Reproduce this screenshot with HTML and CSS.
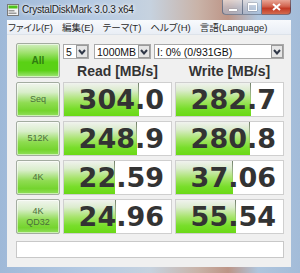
FILE: index.html
```html
<!DOCTYPE html>
<html lang="ja">
<head>
    <meta charset="UTF-8">
    <title>CrystalDiskMark 3.0.3 x64</title>
    <link rel="stylesheet" href="styles.css">
</head>
<body>

    <div class="window">
        <div class="titlebar">
            <svg class="app-icon" width="12" height="12" viewBox="0 0 12 12">
                <rect x="0.5" y="0.5" width="11" height="11" fill="#f4f4f4" stroke="#7a7a7a"/>
                <rect x="1.5" y="1.5" width="9" height="3" fill="#4cc21a"/>
                <rect x="1.5" y="6" width="6" height="1.5" fill="#9a9a9a"/>
                <rect x="1.5" y="8.5" width="8" height="1.5" fill="#9a9a9a"/>
            </svg>
            <span class="title">CrystalDiskMark 3.0.3 x64</span>
            <div class="caption-buttons">
                <span class="cap-btn cap-min"><i></i></span>
                <span class="cap-btn cap-max"><i></i></span>
                <span class="cap-btn cap-close">
                    <svg width="9" height="8" viewBox="0 0 9 8">
                        <path d="M1 1 L8 7 M8 1 L1 7" stroke="#fff" stroke-width="2"/>
                    </svg>
                </span>
            </div>
        </div>

        <div class="client">
            <ul class="menubar">
                <li>ファイル(F)</li>
                <li>編集(E)</li>
                <li>テーマ(T)</li>
                <li>ヘルプ(H)</li>
                <li>言語(Language)</li>
            </ul>

            <div class="board">
                <div class="label-btn all">All</div>

                <div class="controls">
                    <div class="selects">
                        <div class="combo combo-count"><span>5</span><i class="drop"></i></div>
                        <div class="combo combo-size"><span>1000MB</span><i class="drop"></i></div>
                        <div class="combo combo-drive"><span>I: 0% (0/931GB)</span><i class="drop"></i></div>
                    </div>
                    <div class="headers">
                        <span>Read [MB/s]</span>
                        <span>Write [MB/s]</span>
                    </div>
                </div>

                <div class="label-btn">Seq</div>
                <div class="cell" style="--fill: 75px"><span class="value">304.0</span></div>
                <div class="cell" style="--fill: 75px"><span class="value">282.7</span></div>

                <div class="label-btn">512K</div>
                <div class="cell" style="--fill: 73px"><span class="value">248.9</span></div>
                <div class="cell" style="--fill: 74px"><span class="value">280.8</span></div>

                <div class="label-btn">4K</div>
                <div class="cell" style="--fill: 51px"><span class="value">22.59</span></div>
                <div class="cell" style="--fill: 57px"><span class="value">37.06</span></div>

                <div class="label-btn two-line">4K<br>QD32</div>
                <div class="cell" style="--fill: 52px"><span class="value">24.96</span></div>
                <div class="cell" style="--fill: 60px"><span class="value">55.54</span></div>

                <div class="status"></div>
            </div>
        </div>
    </div>

</body>
</html>
```

FILE: styles.css
```css
body {
    margin: 0;
    background: #fff;
}
.window {
    width: 300px;
    height: 273px;
    box-sizing: border-box;
    padding: 0 9px 6px 7px;
    background: linear-gradient(to right, #9fb9d8 0%, #b5cae3 30%, #c6d2df 50%, #c9b3a8 66%, #bd9587 76%, #afc5dd 86%, #a3bcd9 100%);
    display: flex;
    flex-direction: column;
    font-family: "Liberation Sans", "Noto Sans CJK JP", sans-serif;
}

/* title bar */
.titlebar {
    height: 20px;
    display: flex;
    align-items: center;
    position: relative;
}
.app-icon {
    margin-top: -1px;
    flex: none;
}
.title {
    margin-left: 3px;
    margin-top: -2px;
    font-size: 10px;
    letter-spacing: -0.2px;
    color: #1c1c1c;
    text-shadow: 0 0 5px #fff, 0 0 3px #fff;
}
.caption-buttons {
    margin-left: auto;
    align-self: flex-start;
    display: flex;
    height: 15px;
}
.cap-btn {
    box-sizing: border-box;
    height: 15px;
    display: flex;
    align-items: center;
    justify-content: center;
    border: 1px solid rgba(45, 65, 95, 0.55);
    border-top: none;
}
.cap-min,
.cap-max {
    width: 20px;
    background: linear-gradient(to bottom, rgba(255, 255, 255, 0.55), rgba(200, 215, 235, 0.45) 50%, rgba(160, 185, 215, 0.5));
}
.cap-min {
    border-radius: 0 0 0 4px;
    border-right: none;
}
.cap-min i {
    width: 8px;
    height: 2px;
    margin-top: 5px;
    background: #fff;
    box-shadow: 0 0 1px #333;
}
.cap-max i {
    width: 7px;
    height: 5px;
    border: 1px solid #fff;
    border-top-width: 2px;
    box-shadow: 0 0 1px #333;
}
.cap-close {
    width: 29px;
    border-left: none;
    border-radius: 0 0 4px 0;
    background: linear-gradient(to bottom, #e8a595 0%, #d26550 45%, #c23a25 60%, #d26a4e 100%);
}

/* client area */
.client {
    flex: 1;
    background: #f0f0f0;
    display: flex;
    flex-direction: column;
}
.menubar {
    list-style: none;
    margin: 0;
    padding: 0 0 0 1px;
    height: 15px;
    display: flex;
    gap: 9px;
    align-items: center;
    background: linear-gradient(to bottom, #f8fafd, #e9eef5);
    border-bottom: 1px solid #dde3ea;
    box-sizing: border-box;
    font-size: 9.5px;
    font-feature-settings: "palt";
    color: #2a2a2a;
}
.menubar li {
    white-space: nowrap;
}

.board {
    display: grid;
    grid-template-columns: 44px 109px 109px;
    grid-template-rows: repeat(5, 35px) 20px;
    column-gap: 3px;
    row-gap: 4px;
    padding: 8px 0 6px 9px;
}

.label-btn {
    box-sizing: border-box;
    display: flex;
    align-items: center;
    justify-content: center;
    text-align: center;
    border: 1px solid #a3aca0;
    border-radius: 2px;
    box-shadow: inset 0 0 0 1px rgba(255, 255, 255, 0.55);
    background: linear-gradient(to bottom, #f1f5ee 0%, #d9eecb 28%, #8fdc52 60%, #74d42e 84%, #92df5e 100%);
    font-size: 9px;
    line-height: 11px;
    color: #4a6f3a;
}
.label-btn.all {
    background: linear-gradient(to bottom, #d2eec0 0%, #a2e273 25%, #5ad115 55%, #5ad116 80%, #a2e57a 100%);
    font-size: 10px;
    font-weight: bold;
    color: #2f7c10;
}

.controls {
    grid-column: 2 / 4;
    display: flex;
    flex-direction: column;
    justify-content: space-between;
}
.selects {
    display: flex;
    margin-top: 1px;
}
.combo {
    box-sizing: border-box;
    height: 15px;
    display: flex;
    align-items: center;
    background: #fff;
    border: 1px solid #a9a9a9;
    font-size: 10.5px;
    color: #111;
}
.combo span {
    flex: 1;
    padding-left: 2px;
    white-space: nowrap;
}
.combo-count {
    width: 26px;
}
.combo-size {
    width: 57px;
    margin-left: 5px;
}
.combo-drive {
    width: 130px;
    margin-left: 3px;
}
.drop {
    box-sizing: border-box;
    width: 12px;
    height: 13px;
    border: 1px solid #9a9a9a;
    background: #e6e6e6 url("data:image/svg+xml;utf8,<svg xmlns='http://www.w3.org/2000/svg' width='8' height='6'><path d='M1 1 L4 4.5 L7 1' fill='none' stroke='%23303848' stroke-width='2'/></svg>") no-repeat center;
}
.headers {
    display: grid;
    grid-template-columns: 109px 109px;
    column-gap: 3px;
    font-size: 14px;
    font-weight: bold;
    line-height: 14px;
    text-align: center;
    color: #333;
}

.cell {
    box-sizing: border-box;
    display: flex;
    align-items: center;
    justify-content: flex-end;
    padding-right: 7px;
    border: 1px solid #cfcfcf;
    background-color: #fff;
    background-image:
        linear-gradient(to bottom, rgba(70, 90, 60, 0.75), rgba(70, 90, 60, 0) 65%),
        linear-gradient(to bottom, #f0f2ee 0%, #dcecce 22%, #a6e46a 52%, #78de2a 78%, #6ad916 100%);
    background-repeat: no-repeat;
    background-size: 1px 100%, var(--fill) 100%;
    background-position: calc(var(--fill) - 1px) 0, 0 0;
}
.value {
    font-family: "DejaVu Sans", sans-serif;
    font-weight: bold;
    font-size: 27px;
    line-height: 1;
    color: #333;
}

.status {
    grid-column: 1 / 4;
    margin-top: 3px;
    background: #fff;
    border: 1px solid #c8c8c8;
}
```
